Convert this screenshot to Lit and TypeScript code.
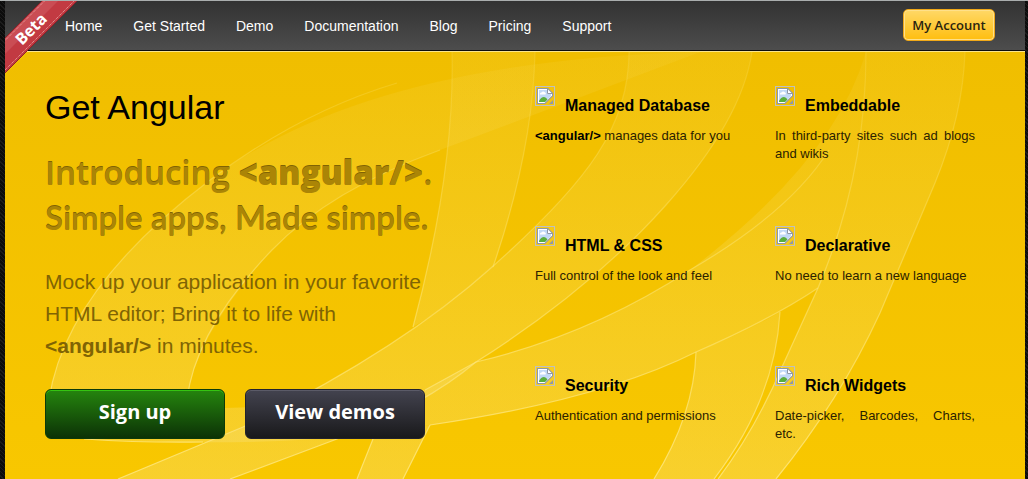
import { LitElement, html, css, svg } from "lit";
import { customElement, property } from "lit/decorators.js";

interface Feature {
  title: string;
  text: unknown;
}

const NAV = ["Home", "Get Started", "Demo", "Documentation", "Blog", "Pricing", "Support"];

const FEATURES: Feature[] = [
  { title: "Managed Database", text: html`<b>&lt;angular/&gt;</b> manages data for you` },
  { title: "Embeddable", text: "In third-party sites such ad blogs and wikis" },
  { title: "HTML & CSS", text: "Full control of the look and feel" },
  { title: "Declarative", text: "No need to learn a new language" },
  { title: "Security", text: "Authentication and permissions" },
  { title: "Rich Widgets", text: "Date-picker, Barcodes, Charts, etc." },
];

// Each ribbon is a filled area plus the highlight lines along its edges.
const RIBBONS = [
  {
    area: "M629 52C629 125 590 180 492 267Q400 350 243 427L118 479H230L337 439Q425 405 476 362Q590 290 666 205Q742 120 752 52Z",
    edges: "M629 52C629 125 590 180 492 267Q400 350 243 427L118 479M230 479L337 439Q425 405 476 362Q590 290 666 205Q742 120 752 52",
  },
  {
    area: "M866 52Q835 160 690 270Q590 335 476 362L425 390Q340 405 225 408L84 439Q300 450 430 425Q600 400 696 352Q770 320 818 288Q866 175 866 52Z",
    edges: "M829 150Q790 212 690 270Q590 335 476 362L425 390M84 439Q145 443 203 442M430 425Q600 400 696 352Q770 320 818 288",
  },
  {
    area: "M452 52Q455 170 413 327Q450 305 493 267Q533 150 535 52Z",
    edges: "M452 52Q455 170 413 327M493 267Q533 150 535 52",
  },
  {
    area: "M866 52Q866 175 818 288L782 367Q755 430 718 479H776Q840 400 880 313L935 183Q963 115 965 52Z",
    edges: "M866 52Q866 175 818 288L782 367Q755 430 718 479M776 479Q840 400 880 313L935 183Q963 115 965 52",
  },
  {
    area: "M696 352Q694 415 654 479H714Q775 400 780 312Q740 335 696 352Z",
    edges: "M696 352Q694 415 654 479M714 479Q775 400 780 312",
  },
  {
    area: "M373 439L357 479H403L430 425Z",
    edges: "M373 439L357 479M403 479L430 425",
  },
  {
    area: "M700 52Q370 60 210 180Q65 290 49 400H187Q195 335 272 250Q330 190 440 150Q560 105 700 52Z",
    edges: "M397 83Q300 112 210 180Q65 290 49 400M187 400Q195 330 272 250Q330 190 440 150",
  },
];

@customElement("swoosh-backdrop")
export class SwooshBackdrop extends LitElement {
  static styles = css`
    :host {
      display: block;
    }
    .art {
      display: block;
      width: 100%;
      height: 100%;
    }
    .area {
      fill: url(#sheen);
    }
    .edge {
      fill: none;
      stroke: url(#glint);
      stroke-width: 1.2;
    }
  `;

  render() {
    return html`<svg class="art" viewBox="5 52 1020 427" preserveAspectRatio="xMidYMin slice" aria-hidden="true">
      <defs>
        <linearGradient id="sheen" gradientUnits="userSpaceOnUse" x1="0" y1="52" x2="0" y2="479">
          <stop offset="0" stop-color="#f8e06c" stop-opacity="0.1" />
          <stop offset="0.5" stop-color="#f8e06c" stop-opacity="0.24" />
          <stop offset="1" stop-color="#f9e07c" stop-opacity="0.36" />
        </linearGradient>
        <linearGradient id="glint" gradientUnits="userSpaceOnUse" x1="0" y1="52" x2="0" y2="479">
          <stop offset="0" stop-color="#fbe36d" stop-opacity="0.2" />
          <stop offset="1" stop-color="#ffe985" stop-opacity="0.8" />
        </linearGradient>
      </defs>
      ${RIBBONS.map((r) => svg`<path class="area" d=${r.area} /><path class="edge" d=${r.edges} />`)}
    </svg>`;
  }
}

@customElement("feature-card")
export class FeatureCard extends LitElement {
  @property() heading = "";
  @property({ attribute: false }) text: unknown = "";

  static styles = css`
    :host {
      display: block;
    }
    .head {
      display: flex;
      gap: 10px;
      height: 41px;
    }
    .pic {
      flex: none;
      width: 20px;
      height: 20px;
    }
    .title {
      margin: 10px 0 0;
      font-size: 16px;
      line-height: 20px;
      font-weight: bold;
      white-space: nowrap;
    }
    .text {
      margin: 0;
      font-size: 13px;
      line-height: 18px;
      text-align: justify;
      color: #2b2200;
    }
    .text b {
      color: #000;
    }
  `;

  render() {
    return html`
      <div class="head">
        <svg class="pic" viewBox="0 0 20 20" aria-hidden="true">
          <rect x="0.5" y="0.5" width="19" height="19" fill="none" stroke="#c0c0c0" />
          <path d="M2 2H13L18 7V10L10 18H2Z" fill="#8f98a8" />
          <path d="M3 3H12.500L17 7.500V9.500L9.500 17H3Z" fill="#fff" />
          <path d="M4 4H12V8H16V10L10 16H4Z" fill="#c1d8f6" />
          <path d="M5 8.500a1.500 1.500 0 0 1 1.500-2a2 2 0 0 1 3.500 0a1.200 1.200 0 0 1 0.500 2Z" fill="#fff" />
          <path d="M4 16V15Q6 11 9 11Q11 11 12.500 13.500L10 16Z" fill="#5aad3a" />
          <path d="M12.500 3V7.500H17" fill="none" stroke="#8f98a8" />
          <path d="M18 14V18H14Z" fill="#8f98a8" />
        </svg>
        <h3 class="title">${this.heading}</h3>
      </div>
      <p class="text">${this.text}</p>
    `;
  }
}

@customElement("app-root")
export class AppRoot extends LitElement {
  static styles = css`
    :host {
      display: flex;
      flex-direction: column;
      position: relative;
      box-sizing: border-box;
      min-height: 100vh;
      padding: 0 3px 0 5px;
      border-top: 1px solid #a9adad;
      overflow: hidden;
      background: repeating-linear-gradient(45deg, #0c0c0c 0 2px, #1c1c1c 2px 3px);
      font-family: "Liberation Sans", Arial, sans-serif;
      color: #000;
    }
    .bar {
      display: flex;
      align-items: center;
      justify-content: space-between;
      box-sizing: border-box;
      height: 50px;
      padding: 0 30px 0 60px;
      border-bottom: 1px solid #0d0d0d;
      background: linear-gradient(#323232, #4d4d4d);
    }
    .menu {
      display: flex;
      gap: 31px;
      margin: 0;
      padding: 0;
      list-style: none;
    }
    .link {
      color: #fff;
      font-size: 14px;
      line-height: 20px;
      text-decoration: none;
      white-space: nowrap;
    }
    .account {
      box-sizing: border-box;
      width: 92px;
      height: 32px;
      margin: 0 0 2px;
      padding: 0;
      border: 1px solid #f0a818;
      border-radius: 5px;
      background: linear-gradient(#ffd867, #ffbe10);
      box-shadow: inset 0 0 0 1px #ffe08a;
      color: #2a2410;
      font: 600 13px/20px "Open Sans", "Noto Sans", sans-serif;
      white-space: nowrap;
    }
    .ribbon {
      position: absolute;
      top: 0;
      left: 5px;
      width: 73px;
      height: 73px;
    }
    .beta {
      fill: #fff;
      font: bold 16px "Open Sans", "Noto Sans", sans-serif;
      text-anchor: middle;
    }
    .hero {
      position: relative;
      flex: 1;
      display: grid;
      grid-template-columns: minmax(0, 38fr) minmax(0, 44fr);
      column-gap: 110px;
      padding: 34px 50px 0 40px;
      border-top: 1px solid #fbe58c;
      background: linear-gradient(#f0be00, #f8c700);
    }
    .backdrop {
      position: absolute;
      inset: 0;
    }
    .intro,
    .features {
      position: relative;
    }
    .title {
      margin: 0;
      font-size: 34px;
      line-height: 42px;
      font-weight: normal;
    }
    .tagline {
      margin: 23px 0 0;
      color: #ab8506;
      font: 600 33px/44px "Open Sans", "Noto Sans", sans-serif;
      text-shadow: 0 -1px 0 #806304;
      white-space: nowrap;
    }
    .line {
      display: block;
    }
    .line.tight {
      font-family: Lato, sans-serif;
    }
    .lead {
      margin: 27px 0 0;
      color: #806404;
      font-size: 21px;
      line-height: 32px;
    }
    .actions {
      display: flex;
      gap: 20px;
      margin-top: 27px;
    }
    .action {
      flex: 1;
      height: 50px;
      padding: 0 0 4px;
      border: 1px solid #0c3a08;
      border-radius: 6px;
      background: linear-gradient(#25850e, #0c3206);
      box-shadow: inset 0 1px 0 #35c412;
      color: #fff;
      font: bold 20px/28px "Open Sans", "Noto Sans", sans-serif;
    }
    .action.dark {
      border-color: #22222c;
      background: linear-gradient(#43434f, #19191b);
      box-shadow: inset 0 1px 0 #5b5b68;
    }
    .features {
      display: grid;
      grid-template-columns: repeat(2, minmax(0, 1fr));
      grid-template-rows: 140px 140px auto;
      align-content: start;
      column-gap: 40px;
    }
  `;

  render() {
    return html`
      <header class="bar">
        <nav>
          <ul class="menu">
            ${NAV.map((name) => html`<li><a class="link" href="#">${name}</a></li>`)}
          </ul>
        </nav>
        <button class="account" type="button">My Account</button>
      </header>
      <main class="hero">
        <swoosh-backdrop class="backdrop"></swoosh-backdrop>
        <section class="intro">
          <h1 class="title">Get Angular</h1>
          <h2 class="tagline">
            <span class="line">Introducing <b>&lt;angular/&gt;</b>.</span>
            <span class="line tight">Simple apps, Made simple.</span>
          </h2>
          <p class="lead">
            Mock up your application in your favorite HTML editor; Bring it to life with
            <b>&lt;angular/&gt;</b> in minutes.
          </p>
          <div class="actions">
            <button class="action" type="button">Sign up</button>
            <button class="action dark" type="button">View demos</button>
          </div>
        </section>
        <section class="features">
          ${FEATURES.map((f) => html`<feature-card .heading=${f.title} .text=${f.text}></feature-card>`)}
        </section>
      </main>
      <svg class="ribbon" viewBox="5 1 73 73">
        <path d="M43 0H78L5 73V38Z" fill="#c23a42" />
        <path d="M43 0H59L5 54V38Z" fill="#cf5a60" opacity="0.6" />
        <path d="M45.500 0L5 40.500M75 0L5 70" stroke="#f0b0b0" stroke-dasharray="1 1" fill="none" />
        <path d="M43 0L5 38M78 0L5 73" stroke="#8e2028" fill="none" />
        <text class="beta" transform="translate(35 33) rotate(-45)">Beta</text>
      </svg>
    `;
  }
}
